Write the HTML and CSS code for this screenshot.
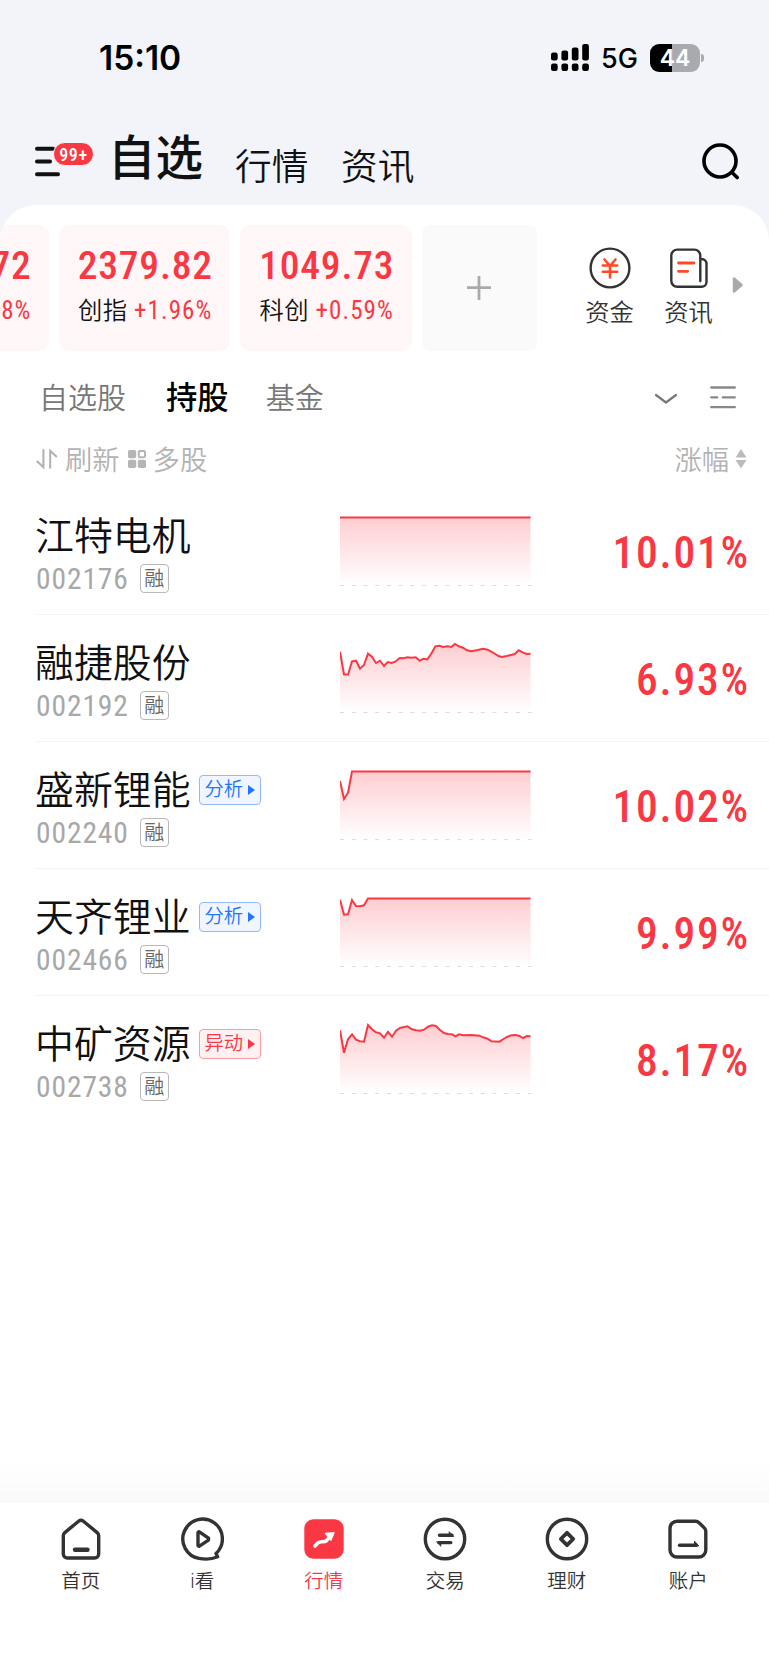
FILE: index.html
```html
<!DOCTYPE html>
<html lang="zh-CN">

<head>
  <meta charset="UTF-8">
  <meta name="viewport" content="width=device-width, initial-scale=1.0">
  <title>自选</title>
  <link rel="stylesheet" href="styles.css">
</head>

<body>
  <div class="status-bar">
    <span class="time">15:10</span>
    <div class="status-icons">
      <svg class="signal" width="38" height="28" viewBox="0 0 38 28">
        <rect x="0" y="8.5" width="6.7" height="8" rx="2.2" />
        <rect x="10.4" y="6.5" width="6.7" height="10" rx="2.2" />
        <rect x="20.8" y="3.5" width="6.7" height="13" rx="2.2" />
        <rect x="31.2" y="0" width="6.7" height="16.5" rx="2.2" />
        <rect x="0" y="19.5" width="6.7" height="7.5" rx="2.2" />
        <rect x="10.4" y="19.5" width="6.7" height="7.5" rx="2.2" />
        <rect x="20.8" y="19.5" width="6.7" height="7.5" rx="2.2" />
        <rect x="31.2" y="19.5" width="6.7" height="7.5" rx="2.2" />
      </svg>
      <span class="network">5G</span>
      <div class="battery">
        <span class="battery-level">44</span>
        <span class="battery-cap"></span>
      </div>
    </div>
  </div>

  <header class="header">
    <div class="menu">
      <svg width="26" height="32" viewBox="0 0 26 32">
        <path d="M2 2.8h16M2 15.5h13M2 28.2h21" stroke="#111" stroke-width="4" stroke-linecap="round" />
      </svg>
      <span class="badge">99+</span>
    </div>
    <h1 class="nav-title">自选</h1>
    <span class="nav-link">行情</span>
    <span class="nav-link">资讯</span>
    <svg class="search" width="38" height="38" viewBox="0 0 38 38" fill="none" stroke="#000" stroke-width="3.6"
      stroke-linecap="round">
      <circle cx="18" cy="18" r="16" />
      <path d="M30 29.5l5.2 5" />
    </svg>
  </header>

  <main class="panel">
    <div class="top-row">
      <div class="index-list">
        <div class="index-card cut">
          <div class="index-value">72</div>
          <div class="index-info"><b>8%</b></div>
        </div>
        <div class="index-card">
          <div class="index-value">2379.82</div>
          <div class="index-info">创指 <b>+1.96%</b></div>
        </div>
        <div class="index-card">
          <div class="index-value">1049.73</div>
          <div class="index-info">科创 <b>+0.59%</b></div>
        </div>
        <div class="add-card">
          <svg width="24" height="24" viewBox="0 0 24 24">
            <path d="M12 0v24M0 11.7h24" stroke="#aaa" stroke-width="2.8" />
          </svg>
        </div>
      </div>
      <div class="shortcut">
        <svg width="42" height="42" viewBox="0 0 42 42" fill="none" stroke-linecap="round">
          <circle cx="21" cy="21" r="19.4" stroke="#333" stroke-width="2.4" />
          <path d="M15.5 12.5l5.5 6.5 5.5-6.5M13.8 18.5h14.4M13.8 24.7h14.4M21 19v11.5" stroke="#ff4a26"
            stroke-width="2.6" />
        </svg>
        <span>资金</span>
      </div>
      <div class="shortcut">
        <svg width="42" height="42" viewBox="0 0 42 42" fill="none" stroke-linecap="round">
          <path d="M32.3 12h1.2a5 5 0 0 1 5 5v18a4.8 4.8 0 0 1-4.8 4.8H9.3a6 6 0 0 1-6-6V8.6a6 6 0 0 1 6-6h17a6 6 0 0 1 6 6V34"
            stroke="#333" stroke-width="2.4" />
          <path d="M10.5 16h15.5M10.5 24.3h9.2" stroke="#ff4a26" stroke-width="2.8" />
        </svg>
        <span>资讯</span>
      </div>
      <svg class="more" width="12" height="18" viewBox="0 0 12 18">
        <path d="M2 2.5v13l7.5-6.5z" fill="#aaa" stroke="#aaa" stroke-width="2.5" stroke-linejoin="round" />
      </svg>
    </div>

    <div class="tabs">
      <span class="tab">自选股</span>
      <span class="tab active">持股</span>
      <span class="tab">基金</span>
      <svg class="chevron" width="24" height="14" viewBox="0 0 24 14" fill="none">
        <path d="M2 3l10 7.5L22 3" stroke="#777" stroke-width="2.2" stroke-linecap="round" />
      </svg>
      <svg width="28" height="26" viewBox="0 0 28 26">
        <path d="M2.2 2.5h23.6M2.2 12.3h6M13.8 12.3h12M2.2 22.2h23.6" stroke="#888" stroke-width="2.3"
          stroke-linecap="round" />
      </svg>
    </div>

    <div class="toolbar">
      <svg width="22" height="22" viewBox="0 0 22 22" fill="none" stroke="#b0b0b0" stroke-width="2">
        <path d="M.8 13l6.6 6.2V1.3M14.2 20.5V2.8L20.8 9" />
      </svg>
      <span class="tool-text">刷新</span>
      <svg class="grid-icon" width="18" height="18" viewBox="0 0 18 18" fill="#b5b5b5">
        <rect width="8.2" height="8.2" rx="1.8" />
        <rect y="9.8" width="8.2" height="8.2" rx="1.8" />
        <rect x="9.8" y="9.8" width="8.2" height="8.2" rx="1.8" />
        <rect x="10.8" y="1" width="6.2" height="6.2" rx="1.2" fill="none" stroke="#b5b5b5" stroke-width="2" />
      </svg>
      <span class="tool-text">多股</span>
      <span class="tool-text sort">涨幅</span>
      <svg width="12" height="20" viewBox="0 0 12 20" fill="#bbb">
        <path d="M6 0l5.5 8.5H.5zM6 19.5L.5 11h11z" />
      </svg>
    </div>

    <div class="stock-list">
      <div class="stock">
        <div class="stock-info">
          <div class="stock-name">江特电机</div>
          <div class="stock-code">002176<span class="margin-tag">融</span></div>
        </div>
        <svg class="chart" width="193" height="74" viewBox="0 0 193 74"></svg>
        <div class="change">10.01%</div>
      </div>
      <div class="stock">
        <div class="stock-info">
          <div class="stock-name">融捷股份</div>
          <div class="stock-code">002192<span class="margin-tag">融</span></div>
        </div>
        <svg class="chart" width="193" height="74" viewBox="0 0 193 74"></svg>
        <div class="change">6.93%</div>
      </div>
      <div class="stock">
        <div class="stock-info">
          <div class="stock-name">盛新锂能<span class="label blue">分析<i></i></span></div>
          <div class="stock-code">002240<span class="margin-tag">融</span></div>
        </div>
        <svg class="chart" width="193" height="74" viewBox="0 0 193 74"></svg>
        <div class="change">10.02%</div>
      </div>
      <div class="stock">
        <div class="stock-info">
          <div class="stock-name">天齐锂业<span class="label blue">分析<i></i></span></div>
          <div class="stock-code">002466<span class="margin-tag">融</span></div>
        </div>
        <svg class="chart" width="193" height="74" viewBox="0 0 193 74"></svg>
        <div class="change">9.99%</div>
      </div>
      <div class="stock">
        <div class="stock-info">
          <div class="stock-name">中矿资源<span class="label red">异动<i></i></span></div>
          <div class="stock-code">002738<span class="margin-tag">融</span></div>
        </div>
        <svg class="chart" width="193" height="74" viewBox="0 0 193 74"></svg>
        <div class="change">8.17%</div>
      </div>
    </div>
  </main>

  <nav class="bottom-nav">
    <div class="nav-item">
      <svg width="44" height="44" viewBox="0 0 44 44" fill="none" stroke="#333" stroke-width="3.4"
        stroke-linejoin="round" stroke-linecap="round">
        <path d="M19.6 4.2L5.8 15.6a4 4 0 0 0-1.5 3V37a4 4 0 0 0 4 4h27.4a4 4 0 0 0 4-4V18.6a4 4 0 0 0-1.5-3L24.4 4.2a3.8 3.8 0 0 0-4.8 0z" />
        <path d="M16 32.8h12.5" stroke-width="4.4" />
      </svg>
      <span>首页</span>
    </div>
    <div class="nav-item">
      <svg width="44" height="44" viewBox="0 0 44 44" fill="none" stroke="#333" stroke-width="3.4"
        stroke-linejoin="round" stroke-linecap="round">
        <path d="M36 36.5A19.8 19.8 0 1 0 19 41.4c6 1.2 13 .9 18.6-1.6z" />
        <path d="M18 15.5v13l1 .8 9.5-6.2v-2l-9.5-6.4z" />
      </svg>
      <span>i看</span>
    </div>
    <div class="nav-item active">
      <svg width="44" height="44" viewBox="0 0 44 44">
        <rect x="2.3" y="2.3" width="39.4" height="39.4" rx="9" fill="#fa3844" />
        <path d="M13 29l2.8-3c2.4-2.4 6.4 0 9-2.6l4-4.8" fill="none" stroke="#fff" stroke-width="3.6"
          stroke-linecap="round" />
        <path d="M23 16.2l9.3-.6-3.4 8z" fill="#fff" stroke="#fff" stroke-width="1" stroke-linejoin="round" />
      </svg>
      <span>行情</span>
    </div>
    <div class="nav-item">
      <svg width="44" height="44" viewBox="0 0 44 44" fill="none" stroke="#333" stroke-linecap="round">
        <circle cx="22" cy="22" r="19.7" stroke-width="3.4" />
        <path d="M16.5 18.2h12.5M15.8 25.6h12" stroke-width="3.4" />
        <path d="M26 18v-3.5l5 5H28zM18 26v3.5l-4.5-4.8z" fill="#333" stroke-width=".5" />
      </svg>
      <span>交易</span>
    </div>
    <div class="nav-item">
      <svg width="44" height="44" viewBox="0 0 44 44" fill="none" stroke="#333" stroke-width="3.4">
        <circle cx="22" cy="22" r="19.7" />
        <path d="M22 15.8l6.2 6.2-6.2 6.2-6.2-6.2z" stroke-width="3.8" stroke-linejoin="round" />
      </svg>
      <span>理财</span>
    </div>
    <div class="nav-item">
      <svg width="44" height="44" viewBox="0 0 44 44" fill="none" stroke="#333" stroke-width="3.4"
        stroke-linecap="round">
        <path d="M11 4.2h18.5a5 5 0 0 1 3.5 1.5l5.3 5.2a5 5 0 0 1 1.5 3.5V33a7 7 0 0 1-7 7H11a7 7 0 0 1-7-7V11.2a7 7 0 0 1 7-7z" />
        <path d="M13.5 28.2h17" />
        <path d="M28.5 27v-2.8l4 4.5z" fill="#333" stroke-width="1" />
      </svg>
      <span>账户</span>
    </div>
  </nav>

  <svg class="defs" width="0" height="0">
    <linearGradient id="fade" gradientUnits="userSpaceOnUse" x1="0" y1="3" x2="0" y2="71">
      <stop offset="0" stop-color="#fa3844" stop-opacity=".25" />
      <stop offset="1" stop-color="#fa3844" stop-opacity="0" />
    </linearGradient>
  </svg>

  <script src="charts.js"></script>
</body>

</html>
```
FILE: styles.css
```css
* {
  box-sizing: border-box;
}

body {
  margin: 0;
  height: 1665px;
  display: flex;
  flex-direction: column;
  background-color: #f3f4f9;
  color: #111;
  font-family: Roboto, 'Noto Sans CJK SC', sans-serif;
  font-weight: 350;
  overflow: hidden;
}

svg {
  display: block;
  flex-shrink: 0;
}

.status-bar {
  height: 115px;
  padding: 0 65px 0 99px;
  display: flex;
  align-items: center;
  justify-content: space-between;
  font-family: Inter, sans-serif;
  color: #000;
}

.time {
  font-size: 33.5px;
  font-weight: 600;
}

.status-icons {
  display: flex;
  align-items: center;
}

.network {
  margin-left: 12px;
  width: 49px;
  font-size: 27px;
  font-weight: 500;
  line-height: 28px;
  padding-top: 3px;
}

.battery {
  display: flex;
  align-items: center;
}

.battery-level {
  width: 50px;
  height: 28px;
  border-radius: 9px;
  background: linear-gradient(to right, #000 44%, #a9aaaf 44%);
  color: #fff;
  font-size: 23px;
  font-weight: 600;
  line-height: 28px;
  text-align: center;
}

.battery-cap {
  width: 3px;
  height: 8px;
  margin-left: 1px;
  border-radius: 0 4px 4px 0;
  background-color: #a9aaaf;
}

.header {
  height: 90px;
  padding: 0 29px 0 35px;
  display: flex;
  align-items: flex-start;
}

.menu {
  position: relative;
  width: 73px;
  padding-top: 31px;
}

.badge {
  position: absolute;
  left: 18px;
  top: 27px;
  width: 41px;
  height: 24px;
  border: 1px solid #f3f4f9;
  border-radius: 12px;
  background-color: #fa3844;
  color: #fff;
  font-size: 18px;
  font-weight: 500;
  font-stretch: 85%;
  line-height: 24px;
  letter-spacing: 0.6px;
  text-align: center;
}

.nav-title {
  margin: 20px 0 0;
  width: 127px;
  font-size: 47.5px;
  font-weight: 500;
  line-height: 48px;
}

.nav-link {
  margin-top: 35px;
  width: 106px;
  font-size: 36.7px;
  line-height: 36px;
}

.search {
  margin: 28px 0 0 auto;
}

.panel {
  flex: 1;
  border-radius: 36px 36px 0 0;
  background-color: #fff;
  overflow: hidden;
}

.top-row {
  padding-top: 20px;
  display: flex;
}

.index-list {
  width: 537px;
  height: 126px;
  display: flex;
  gap: 10px;
}

.index-card {
  flex: 0 0 171.5px;
  padding-top: 19px;
  border-radius: 10px;
  background-color: #fff6f7;
  text-align: center;
}

.index-card.cut {
  flex: 1;
  min-width: 0;
  padding-right: 17px;
  border-radius: 0 10px 10px 0;
  display: flex;
  flex-direction: column;
  align-items: flex-end;
}

.index-value {
  padding-left: 2px;
  color: #fa3844;
  font-size: 39.5px;
  font-weight: 500;
  font-stretch: 85%;
  line-height: 44px;
  letter-spacing: 0.8px;
}

.index-info {
  margin-top: 7px;
  padding-left: 2px;
  font-size: 24.3px;
  line-height: 32px;
  letter-spacing: 0.5px;
  white-space: nowrap;
}

.index-info b {
  color: #fa3844;
  font-size: 25px;
  font-weight: 400;
  font-stretch: 85%;
  letter-spacing: 1.1px;
}

.add-card {
  flex: 0 0 115.5px;
  display: flex;
  align-items: center;
  justify-content: center;
  border-radius: 8px;
  background-color: #fafafa;
}

.shortcut {
  width: 79px;
  padding-top: 22px;
  display: flex;
  flex-direction: column;
  align-items: center;
  color: #333;
  font-size: 24.3px;
  line-height: 28px;
}

.shortcut span {
  margin-top: 10px;
}

.index-list + .shortcut {
  margin-left: 33px;
}

.more {
  margin: 51px 0 0 4px;
}

.tabs {
  height: 93px;
  padding: 0 32px 0 39px;
  display: flex;
  align-items: center;
  color: #777;
  font-size: 29px;
}

.tab {
  margin: -4px 40px 0 0;
}

.tab.active {
  margin-right: 37px;
  color: #000;
  font-size: 31.3px;
  font-weight: 550;
}

.chevron {
  margin: 2px 31px 0 auto;
}

.toolbar {
  height: 30px;
  padding: 0 22px 0 36px;
  display: flex;
  align-items: center;
  color: #b3b3b3;
  font-size: 27.3px;
  line-height: 28px;
}

.tool-text {
  margin: 3px 0 0 7px;
}

.grid-icon {
  margin: -1px 0 0 8px;
}

.sort {
  margin: 3px 6px 0 auto;
}

.stock-list {
  margin: 14px 0 0 35px;
}

.stock {
  height: 127px;
  display: flex;
  border-bottom: 1px solid #f5f5f5;
}

.stock:last-child {
  border-bottom: none;
}

.stock-info {
  width: 305px;
  padding-top: 28px;
}

.stock-name {
  display: flex;
  align-items: center;
  height: 42px;
  font-size: 38.9px;
  line-height: 34px;
}

.label {
  width: 62px;
  height: 30px;
  margin: -3px 0 0 8px;
  padding-left: 5px;
  display: flex;
  align-items: center;
  border: 1px solid;
  border-radius: 4px;
  font-size: 19.3px;
}

.label i {
  margin-left: 5px;
  border: 5px solid transparent;
  border-left: 7px solid;
  border-right: none;
}

.label.blue {
  border-color: #92bbff;
  background-color: #f0f5ff;
  color: #2175ff;
}

.label.red {
  border-color: #fb9ba2;
  background-color: #fff0f1;
  color: #fa3844;
}

.label.blue i {
  border-left-color: #2175ff;
}

.label.red i {
  border-left-color: #fa3844;
}

.stock-code {
  margin-top: 5px;
  padding-left: 1px;
  display: flex;
  align-items: center;
  height: 32px;
  color: #a8a8a8;
  font-size: 29.5px;
  font-weight: 400;
  font-stretch: 85%;
  letter-spacing: 0.9px;
}

.margin-tag {
  width: 29px;
  height: 29px;
  margin: -2px 0 0 11px;
  border: 1px solid #b8b8b8;
  border-radius: 4px;
  color: #666;
  font-size: 20px;
  font-weight: 350;
  line-height: 29px;
  letter-spacing: 0;
  text-align: center;
}

.chart {
  margin-top: 26px;
}

.change {
  margin: 0 19px 0 auto;
  padding-top: 38px;
  color: #fa3844;
  font-size: 43.5px;
  font-weight: 500;
  font-stretch: 85%;
  line-height: 55px;
  letter-spacing: 1.8px;
}

.bottom-nav {
  position: relative;
  height: 162px;
  padding: 14px 20px 0 20px;
  display: flex;
  background-color: #fff;
}

/* soft shadow above the bar */
.bottom-nav::before {
  content: '';
  position: absolute;
  left: 0;
  right: 0;
  bottom: 100%;
  height: 38px;
  background: linear-gradient(to bottom, #fff, #f9f9f9);
}

.nav-item {
  flex: 1;
  display: flex;
  flex-direction: column;
  align-items: center;
  color: #333;
  font-size: 19.5px;
  line-height: 24px;
}

.nav-item span {
  margin-top: 9px;
}

.nav-item.active {
  color: #fa3844;
}

.defs {
  position: absolute;
}
```
FILE: charts.js
```javascript
const series = [
  '0,3.5 190.5,3.5',
  '0,10.7 4,33.3 8,33.7 12,20.3 16,19.7 20,27.7 24,24 28,12.7 32,15.7 36,22 40,19.7 44,25 47.7,21 51.7,22 55.3,20.7 59.7,17 63.5,17.3 67.5,16.3 71.5,16.7 75.7,16.3 79.7,19.7 83.3,17.7 87.3,18.3 91,13.3 95.3,5.3 99.3,4.7 103.3,6 107.3,5.3 111.3,6 115,3 118.7,5.3 123,6.7 127,9.3 131,10.3 136.7,9.3 143,7.7 147.7,8.7 152,11 159,15.3 162,16 166.7,15 174.7,13 178.7,9.3 182.7,11.3 186.7,13 190.5,12.7',
  '0,13 4,31 8,24.7 12,3.5 190.5,3.5',
  '0,4.7 4,19.7 8,19.3 12,5 16,11 20,11.3 24,10.3 28,3.5 190.5,3.5',
  '0,8.3 4,30.7 8,17.3 12,12.3 16,17.7 20,19.3 24,19.7 28,3 32,7.3 36,10.3 40,11.3 44,15.7 48,10 52,14.7 56,8.7 60,6 67.5,4.3 72,7.3 76,8.3 80,8.7 84,7.7 88,4.7 92,3.3 96,4 100,8 104,11 108,12 112,12.3 115.5,14.3 119,12.3 123,13.3 131,13 139.5,13.7 143,15.3 147.5,16.7 151.5,19.3 159.5,19.7 163.5,17 167.5,14.7 171.5,13.3 175.5,13 179.5,14 183,16 187,14 190.5,14.3'
];

// area fill, price line and dashed base line
document.querySelectorAll('.chart').forEach((chart, i) => {
  chart.innerHTML = `
    <polygon points="0,71 ${series[i]} 190.5,71" fill="url(#fade)" />
    <polyline points="${series[i]}" fill="none" stroke="#fa3844" stroke-width="2" />
    <path d="M0 71.5h193" stroke="#ddd" stroke-width="1.2" stroke-dasharray="4 7.73" />`;
});
```
